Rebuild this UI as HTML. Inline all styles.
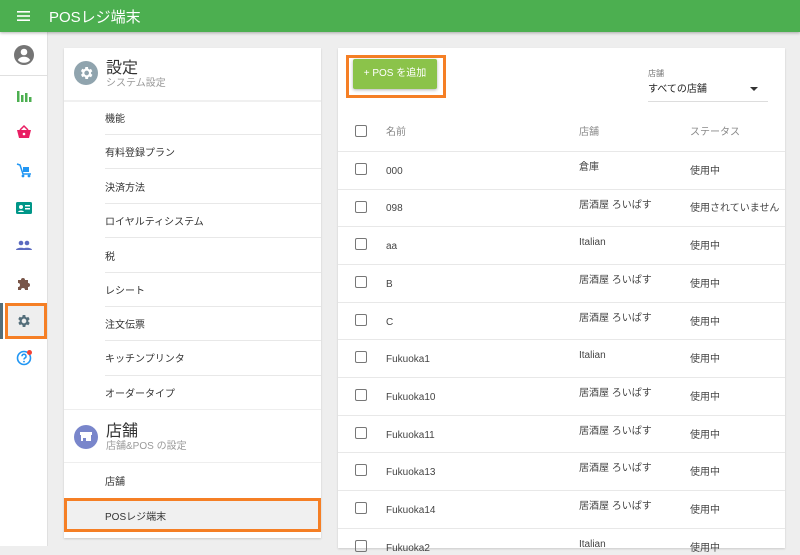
<!DOCTYPE html>
<html><head><meta charset="utf-8"><style>
*{box-sizing:border-box;margin:0;padding:0}
body{width:800px;height:546px;overflow:hidden;background:#eeeeee;font-family:"Liberation Sans","Noto Sans CJK JP",sans-serif;color:#333;position:relative}
.hdr{position:absolute;left:0;top:0;width:800px;height:32px;background:#4caf50;box-shadow:0 1px 3px rgba(0,0,0,.3);z-index:3}
.hdr .t{position:absolute;left:49px;top:6px;color:#fff;font-size:15px}
.side{position:absolute;left:0;top:32px;width:48px;height:514px;background:#fff;border-right:1px solid #e0e0e0}
.ic{position:absolute;left:16px;width:16px;height:16px}
.card{position:absolute;background:#fff;box-shadow:0 1px 2px rgba(0,0,0,.15)}
.it{position:absolute;left:41px;font-size:10px;color:#333;line-height:12px;margin-top:3px}
.ln{position:absolute;left:41px;right:0;height:1px;background:#e8e8e8}
.r{position:absolute;left:0;right:0;height:1px;background:#e8e8e8}
.cb{position:absolute;left:17px;width:12px;height:12px;border:1.5px solid #777;border-radius:2px}
.tx{position:absolute;font-size:10px;color:#444;line-height:12px;margin-top:2px}
</style></head><body>
<div class="hdr">
<svg style="position:absolute;left:17px;top:11px" width="13" height="10"><rect y="0" width="13" height="1.6" fill="#fff"/><rect y="4.2" width="13" height="1.6" fill="#fff"/><rect y="8.4" width="13" height="1.6" fill="#fff"/></svg>
<div class="t">POSレジ端末</div></div>
<div class="side">
<svg class="ic" style="top:12px;left:13px;width:22px;height:22px" viewBox="0 0 22 22"><circle cx="11" cy="11" r="10" fill="#757575"/><circle cx="11" cy="8" r="3.3" fill="#fff"/><path d="M4.8 16c1.5-2.5 3.8-3.3 6.2-3.3s4.7.8 6.2 3.3c-1.5 1.8-3.7 2.8-6.2 2.8s-4.7-1-6.2-2.8z" fill="#fff"/></svg>
<div style="position:absolute;left:0;top:43px;width:48px;height:1px;background:#e0e0e0"></div>
<svg class="ic" style="top:56px" viewBox="0 0 16 16"><rect x="1" y="3" width="2.5" height="11" fill="#4caf50"/><rect x="5" y="7" width="2.5" height="7" fill="#4caf50"/><rect x="9" y="5" width="2.5" height="9" fill="#4caf50"/><rect x="13" y="9" width="2.5" height="5" fill="#4caf50"/></svg>
<svg class="ic" style="top:92px" viewBox="0 0 16 16"><path d="M1 6h14l-2 8H3z" fill="#e91e63"/><path d="M4 6l4-4 4 4" stroke="#e91e63" stroke-width="1.5" fill="none"/><circle cx="8" cy="10" r="1.3" fill="#fff"/></svg>
<svg class="ic" style="top:130px" viewBox="0 0 16 16"><path d="M1 2l3 1 3 9h8" stroke="#2196f3" stroke-width="1.5" fill="none"/><rect x="7" y="5" width="6" height="5" fill="#2196f3"/><circle cx="7" cy="14" r="1.4" fill="#2196f3"/><circle cx="13" cy="14" r="1.4" fill="#2196f3"/></svg>
<svg class="ic" style="top:168px" viewBox="0 0 16 16"><rect x="0" y="2" width="16" height="12" rx="1.5" fill="#009688"/><circle cx="5" cy="7" r="2" fill="#fff"/><path d="M2 12c.5-2 5.5-2 6 0z" fill="#fff"/><rect x="9" y="5" width="5" height="1.5" fill="#fff"/><rect x="9" y="8" width="5" height="1.5" fill="#fff"/></svg>
<svg class="ic" style="top:205px" viewBox="0 0 16 16"><circle cx="5" cy="6" r="2.3" fill="#5c6bc0"/><circle cx="11" cy="6" r="2.3" fill="#5c6bc0"/><path d="M0 13c0-3 10-3 10 0zM6 13c0-3 10-3 10 0z" fill="#5c6bc0"/></svg>
<svg class="ic" style="top:243px" viewBox="0 0 16 16"><path d="M2 5h3a2 2 0 1 1 4 0h3v3a2 2 0 1 1 0 4v3H9a2 2 0 1 0-4 0H2v-3a2 2 0 1 0 0-4z" fill="#795548"/></svg>
<div style="position:absolute;left:0;top:271px;width:3px;height:36px;background:#546e7a"></div>
<div style="position:absolute;left:5px;top:271px;width:42px;height:36px;background:#eee;border:3px solid #f57f25"></div>
<svg class="ic" style="top:281px" viewBox="0 0 24 24"><path fill="#546e7a" d="M19.4 13a7.5 7.5 0 0 0 0-2l2.1-1.6-2-3.5-2.5 1a7 7 0 0 0-1.7-1L15 3h-4l-.4 2.7a7 7 0 0 0-1.7 1l-2.5-1-2 3.5L6.6 11a7.5 7.5 0 0 0 0 2l-2.1 1.6 2 3.5 2.5-1a7 7 0 0 0 1.7 1L11 21h4l.4-2.7a7 7 0 0 0 1.7-1l2.5 1 2-3.5zM13 15.5a3.5 3.5 0 1 1 0-7 3.5 3.5 0 0 1 0 7z" transform="translate(-1 0)"/></svg>
<svg class="ic" style="top:318px" viewBox="0 0 16 16"><circle cx="8" cy="8" r="6.5" stroke="#2196f3" stroke-width="1.6" fill="none"/><path d="M6 6.3a2 2 0 1 1 2.8 1.8c-.6.3-.8.7-.8 1.4" stroke="#2196f3" stroke-width="1.5" fill="none"/><circle cx="8" cy="11.6" r=".9" fill="#2196f3"/><circle cx="13.5" cy="2.5" r="2.5" fill="#f44336"/></svg>
</div>

<div class="card" style="left:64px;top:48px;width:257px;height:490px">
<svg style="position:absolute;left:10px;top:13px" width="24" height="24" viewBox="0 0 24 24"><circle cx="12" cy="12" r="12" fill="#90a4ae"/><path fill="#fff" transform="translate(4 4) scale(.667)" d="M19.4 13a7.5 7.5 0 0 0 0-2l2.1-1.6-2-3.5-2.5 1a7 7 0 0 0-1.7-1L15 3h-4l-.4 2.7a7 7 0 0 0-1.7 1l-2.5-1-2 3.5L6.6 11a7.5 7.5 0 0 0 0 2l-2.1 1.6 2 3.5 2.5-1a7 7 0 0 0 1.7 1L11 21h4l.4-2.7a7 7 0 0 0 1.7-1l2.5 1 2-3.5zM13 15.5a3.5 3.5 0 1 1 0-7 3.5 3.5 0 0 1 0 7z"/></svg>
<div style="position:absolute;left:42px;top:11px;font-size:16px;color:#333;line-height:20px">設定</div>
<div style="position:absolute;left:42px;top:30px;font-size:10px;color:#999;line-height:12px">システム設定</div>
<div class="r" style="top:52px;height:2px;background:#f0f0f0"></div>
<div class="it" style="top:63px">機能</div><div class="ln" style="top:86px"></div>
<div class="it" style="top:97px">有料登録プラン</div><div class="ln" style="top:120px"></div>
<div class="it" style="top:132px">決済方法</div><div class="ln" style="top:155px"></div>
<div class="it" style="top:166px">ロイヤルティシステム</div><div class="ln" style="top:189px"></div>
<div class="it" style="top:201px">税</div><div class="ln" style="top:224px"></div>
<div class="it" style="top:235px">レシート</div><div class="ln" style="top:258px"></div>
<div class="it" style="top:269px">注文伝票</div><div class="ln" style="top:292px"></div>
<div class="it" style="top:303px">キッチンプリンタ</div><div class="ln" style="top:327px"></div>
<div class="it" style="top:338px">オーダータイプ</div>
<div class="r" style="top:361px;background:#eee"></div>
<svg style="position:absolute;left:10px;top:377px" width="24" height="24" viewBox="0 0 24 24"><circle cx="12" cy="12" r="12" fill="#7986cb"/><rect x="6" y="7" width="12" height="3" fill="#fff"/><rect x="7" y="10" width="10" height="6" fill="#fff"/><rect x="9" y="13" width="3" height="3" fill="#7986cb"/></svg>
<div style="position:absolute;left:42px;top:374px;font-size:16px;color:#333;line-height:20px">店舗</div>
<div style="position:absolute;left:42px;top:393px;font-size:10px;color:#999;line-height:12px">店舗&amp;POS の設定</div>
<div class="r" style="top:414px;background:#eee"></div>
<div class="it" style="top:426px">店舗</div>
<div style="position:absolute;left:0;top:450px;width:257px;height:34px;background:#f0f0f0;border:3px solid #f57f25"></div>
<div class="it" style="top:461px">POSレジ端末</div>
</div>

<div class="card" style="left:338px;top:48px;width:447px;height:500px">
<div style="position:absolute;left:8px;top:7px;width:100px;height:43px;border:3px solid #f57f25"></div>
<div style="position:absolute;left:15px;top:11px;width:84px;height:30px;background:#8bc34a;border-radius:2px;box-shadow:0 1px 3px rgba(0,0,0,.3);color:#fff;font-size:10px;text-align:center;line-height:30px">+ POS を追加</div>
<div style="position:absolute;left:310px;top:21px;font-size:8px;color:#777;line-height:10px">店舗</div>
<div style="position:absolute;left:310px;top:36px;font-size:10px;color:#222;line-height:12px">すべての店舗</div>
<svg style="position:absolute;left:412px;top:39px" width="8" height="5"><path d="M0 0h8L4 4z" fill="#333"/></svg>
<div style="position:absolute;left:310px;top:53px;width:120px;height:1px;background:#ddd"></div>
<div class="cb" style="top:77px"></div>
<div class="tx" style="left:48px;top:77px;color:#888">名前</div>
<div class="tx" style="left:241px;top:77px;color:#888">店舗</div>
<div class="tx" style="left:352px;top:77px;color:#888">ステータス</div>
<div class="r" style="top:103px"></div>
<div class="cb" style="top:115px"></div><div class="tx" style="left:48px;top:116px">000</div><div class="tx" style="left:241px;top:112px">倉庫</div><div class="tx" style="left:352px;top:116px">使用中</div>
<div class="r" style="top:141px"></div>
<div class="cb" style="top:153px"></div><div class="tx" style="left:48px;top:153px">098</div><div class="tx" style="left:241px;top:150px">居酒屋 ろいぱす</div><div class="tx" style="left:352px;top:153px">使用されていません</div>
<div class="r" style="top:178px"></div>
<div class="cb" style="top:190px"></div><div class="tx" style="left:48px;top:191px">aa</div><div class="tx" style="left:241px;top:187px">Italian</div><div class="tx" style="left:352px;top:191px">使用中</div>
<div class="r" style="top:216px"></div>
<div class="cb" style="top:228px"></div><div class="tx" style="left:48px;top:229px">B</div><div class="tx" style="left:241px;top:225px">居酒屋 ろいぱす</div><div class="tx" style="left:352px;top:229px">使用中</div>
<div class="r" style="top:254px"></div>
<div class="cb" style="top:266px"></div><div class="tx" style="left:48px;top:267px">C</div><div class="tx" style="left:241px;top:263px">居酒屋 ろいぱす</div><div class="tx" style="left:352px;top:267px">使用中</div>
<div class="r" style="top:291px"></div>
<div class="cb" style="top:303px"></div><div class="tx" style="left:48px;top:304px">Fukuoka1</div><div class="tx" style="left:241px;top:300px">Italian</div><div class="tx" style="left:352px;top:304px">使用中</div>
<div class="r" style="top:329px"></div>
<div class="cb" style="top:341px"></div><div class="tx" style="left:48px;top:342px">Fukuoka10</div><div class="tx" style="left:241px;top:338px">居酒屋 ろいぱす</div><div class="tx" style="left:352px;top:342px">使用中</div>
<div class="r" style="top:367px"></div>
<div class="cb" style="top:379px"></div><div class="tx" style="left:48px;top:380px">Fukuoka11</div><div class="tx" style="left:241px;top:376px">居酒屋 ろいぱす</div><div class="tx" style="left:352px;top:380px">使用中</div>
<div class="r" style="top:404px"></div>
<div class="cb" style="top:416px"></div><div class="tx" style="left:48px;top:417px">Fukuoka13</div><div class="tx" style="left:241px;top:413px">居酒屋 ろいぱす</div><div class="tx" style="left:352px;top:417px">使用中</div>
<div class="r" style="top:442px"></div>
<div class="cb" style="top:454px"></div><div class="tx" style="left:48px;top:455px">Fukuoka14</div><div class="tx" style="left:241px;top:451px">居酒屋 ろいぱす</div><div class="tx" style="left:352px;top:455px">使用中</div>
<div class="r" style="top:480px"></div>
<div class="cb" style="top:492px"></div><div class="tx" style="left:48px;top:493px">Fukuoka2</div><div class="tx" style="left:241px;top:489px">Italian</div><div class="tx" style="left:352px;top:493px">使用中</div>
</div>
</body></html>
